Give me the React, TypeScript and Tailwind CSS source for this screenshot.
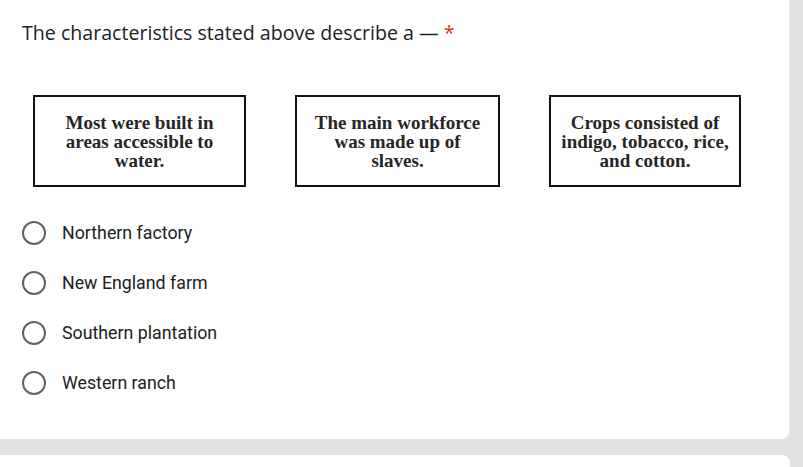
import React from 'react';

const facts = [
    { w: 'w-[213px]', lines: ['Most were built in', 'areas accessible to', 'water.'] },
    { w: 'w-[205px]', lines: ['The main workforce', 'was made up of', 'slaves.'] },
    { w: 'w-[192px]', lines: ['Crops consisted of', 'indigo, tobacco, rice,', 'and cotton.'] },
];

const options = ['Northern factory', 'New England farm', 'Southern plantation', 'Western ranch'];

export default function App() {
    return (
        <div className="w-[803px] h-[467px] overflow-hidden bg-[#e2e2e2] font-['Roboto',sans-serif]">
            {/* Question card */}
            <div className="w-[790px] h-[439px] bg-white rounded-br-[8px] border-r border-[#ececec] pl-[22px] pt-[21px]">
                <div className="text-[19.6px] leading-[24px] text-[#202124] font-['Open_Sans',sans-serif]">
                    The characteristics stated above describe a — <span className="text-[#d93025]">*</span>
                </div>

                {/* Image with three boxes */}
                <div className="flex mt-[50px] ml-[11px] gap-[49px]">
                    {facts.map((f, i) => (
                        <div
                            key={i}
                            className={`${f.w} h-[92px] border-2 border-[#111] flex flex-col items-center justify-center font-['Liberation_Serif',serif] font-bold text-[19px] leading-[19px] text-[#262626] text-center`}
                        >
                            {f.lines.map((l) => (
                                <div key={l}>{l}</div>
                            ))}
                        </div>
                    ))}
                </div>

                {/* Options */}
                <div className="mt-[21px] flex flex-col">
                    {options.map((o) => (
                        <label key={o} className="flex items-center h-[50px]">
                            <span className="w-[24px] h-[24px] rounded-full border-2 border-[#5f6368]" />
                            <span className="ml-[16px] text-[17.8px] text-[#202124]">{o}</span>
                        </label>
                    ))}
                </div>
            </div>
            {/* Next card */}
            <div className="w-[790px] h-[20px] mt-[16px] bg-white rounded-tr-[8px]" />
        </div>
    );
}
